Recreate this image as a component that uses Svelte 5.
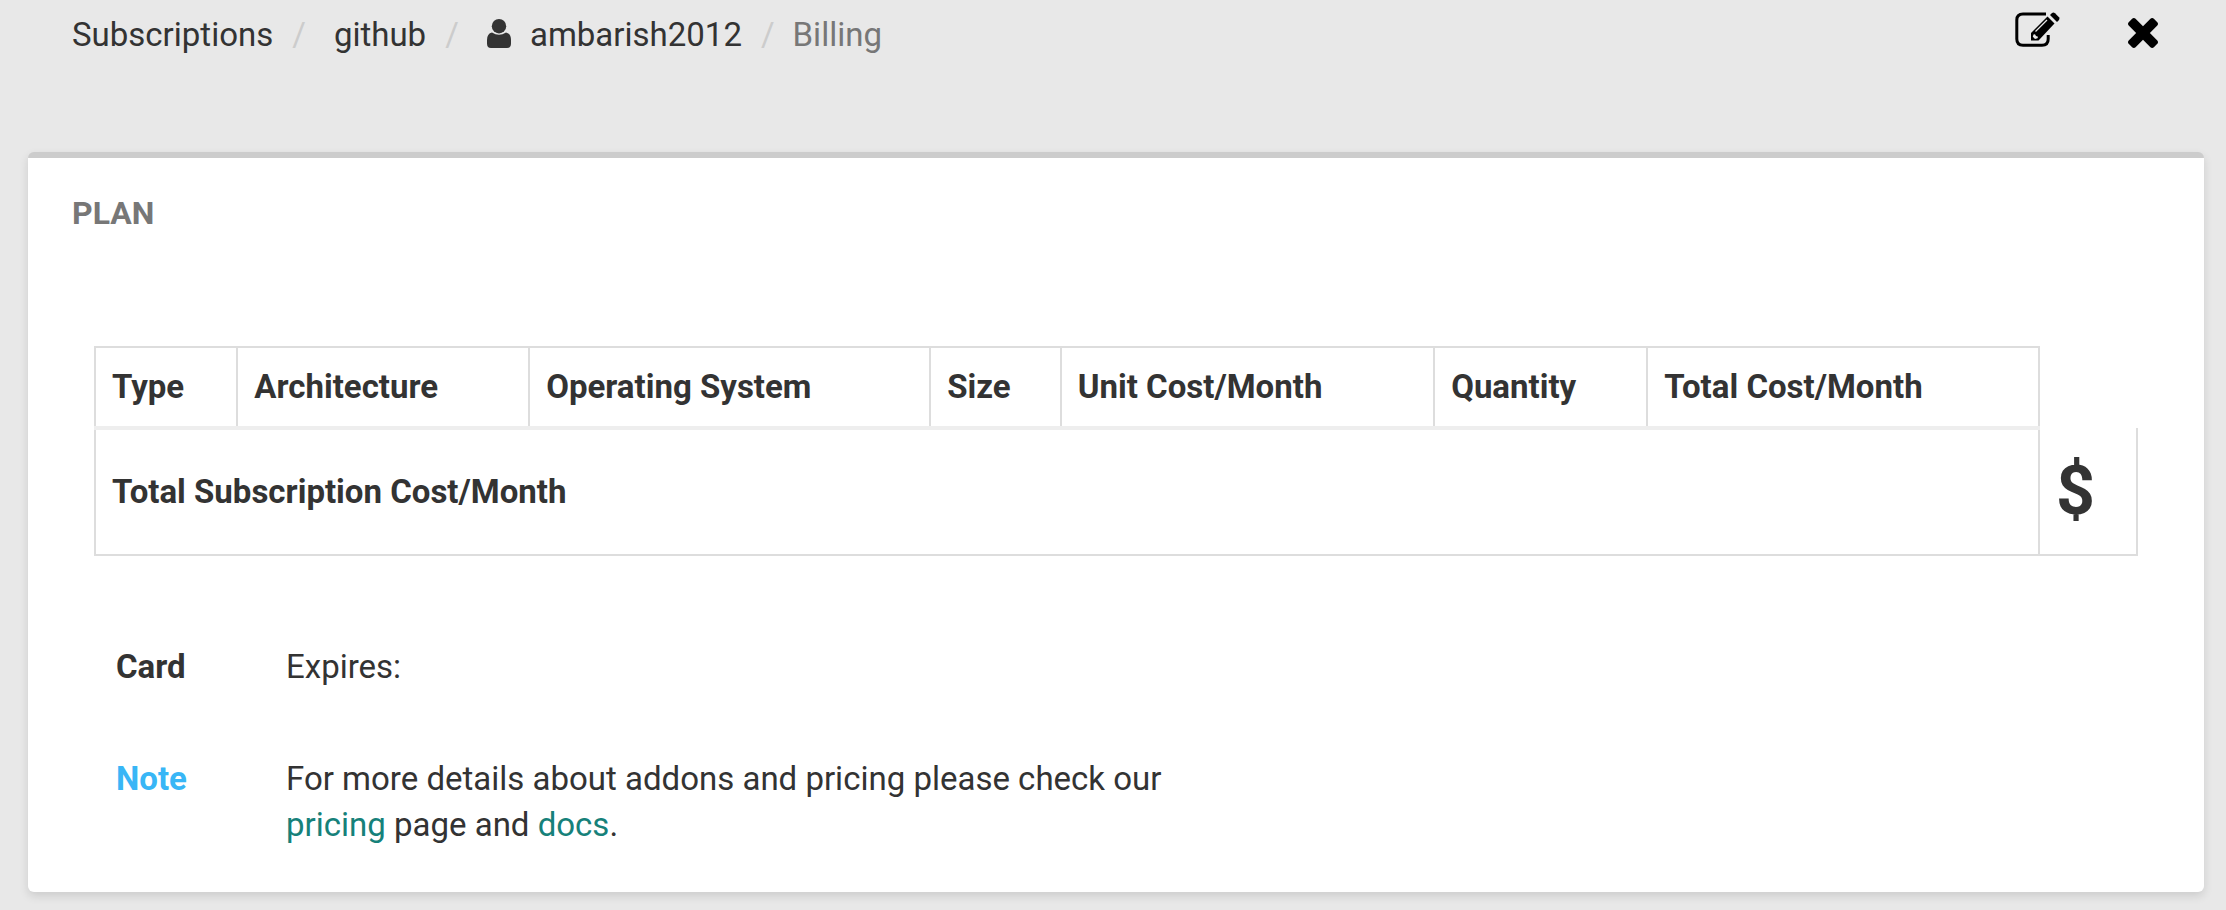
<script>
  const columns = [
    'Type',
    'Architecture',
    'Operating System',
    'Size',
    'Unit Cost/Month',
    'Quantity',
    'Total Cost/Month'
  ];
</script>

<header>
  <nav aria-label="Breadcrumb">
    <ol>
      <li><a href="#subscriptions">Subscriptions</a></li>
      <li><a href="#github">github</a></li>
      <li>
        <a class="user" href="#account">
          <svg viewBox="0 0 24 29" width="24" height="29" aria-hidden="true">
            <circle cx="12" cy="7.200" r="7.200" />
            <path d="M5 13.500Q8.500 15.800 12 15.800Q15.500 15.800 19 13.500Q24 14.500 24 21V24.500Q24 29 20 29H4Q0 29 0 24.500V21Q0 14.500 5 13.500Z" />
          </svg>
          ambarish2012
        </a>
      </li>
      <li class="current" aria-current="page">Billing</li>
    </ol>
  </nav>
  <div class="actions">
    <button type="button" aria-label="Edit">
      <svg viewBox="0 0 46 36" width="46" height="36" aria-hidden="true">
        <path d="M31 2H8Q1.800 2 1.800 8V27Q1.800 33.200 8 33.200H27Q33.200 33.200 33.200 27V23" fill="none" stroke="#000" stroke-width="3" />
        <path d="M16 28.500V21L32.500 4.500L39.500 11.500L23.500 28.500Z" />
        <path d="M35 3L37 1Q38.500 0 40 1.200L44 5.200Q45 6.500 44 8L42 10Z" />
        <path d="M20.500 19.500L32 8" fill="none" stroke="#e8e8e8" stroke-width="1.200" />
        <path d="M18.500 22.500L20 22.200L21 24L23 24.800L22.500 26.300L20 27L17.800 24.800Z" fill="#e8e8e8" />
      </svg>
    </button>
    <button type="button" aria-label="Close">
      <svg viewBox="302 366 1188 1188" width="30" height="30" aria-hidden="true">
        <path d="M1490 1322q0 40-28 68l-136 136q-28 28-68 28t-68-28l-294-294-294 294q-28 28-68 28t-68-28l-136-136q-28-28-28-68t28-68l294-294-294-294q-28-28-28-68t28-68l136-136q28-28 68-28t68 28l294 294 294-294q28-28 68-28t68 28l136 136q28 28 28 68t-28 68l-294 294 294 294q28 28 28 68z" />
      </svg>
    </button>
  </div>
</header>

<main>
  <h1>PLAN</h1>

  <table>
    <thead>
      <tr>
        {#each columns as column}
          <th scope="col">{column}</th>
        {/each}
      </tr>
    </thead>
    <tbody>
      <tr>
        <th scope="row" colspan={columns.length}>Total Subscription Cost/Month</th>
        <td class="total">$</td>
      </tr>
    </tbody>
  </table>

  <dl>
    <dt>Card</dt>
    <dd>Expires:</dd>
    <dt class="note">Note</dt>
    <dd>
      For more details about addons and pricing please check our
      <a href="#pricing">pricing</a> page and <a href="#docs">docs</a>.
    </dd>
  </dl>
</main>

<style>
  :global(body) {
    margin: 0;
    background: #e8e8e8;
    color: #333;
    font: 33px/46px Roboto, sans-serif;
  }

  header {
    display: flex;
    justify-content: space-between;
    padding: 12px 68px 0 72px;
  }

  ol {
    display: flex;
    margin: 0;
    padding: 0;
    list-style: none;
  }

  li + li::before {
    content: '/';
    padding: 0 28px 0 19px;
    color: #ccc;
  }

  li.current::before {
    padding-right: 18px;
  }

  a {
    color: #16817a;
    text-decoration: none;
  }

  nav a {
    color: #333;
  }

  .user svg {
    margin-right: 11px;
    vertical-align: -2px;
    fill: currentColor;
  }

  .current {
    color: #777;
  }

  .actions {
    display: flex;
    align-items: flex-start;
    gap: 67px;
  }

  button {
    display: flex;
    align-items: flex-end;
    height: 36px;
    padding: 0;
    border: 0;
    background: none;
    cursor: pointer;
  }

  main {
    margin: 94px 22px 18px 28px;
    padding: 32px 66px 44px;
    border-top: 6px solid #ccc;
    border-radius: 6px;
    background: #fff;
    box-shadow: 0 4px 10px rgba(0, 0, 0, 0.12);
  }

  h1 {
    margin: 0 0 110px -22px;
    color: #777;
    font-size: 32px;
    line-height: 46px;
    font-weight: 700;
  }

  table {
    width: 100%;
    border-collapse: collapse;
  }

  th,
  td {
    padding: 16px;
    border: 2px solid #ddd;
    text-align: left;
    font-weight: 700;
  }

  thead th {
    border-bottom: 4px solid #eee;
  }

  .total {
    border-top: 0;
    font-size: 68px;
    line-height: 94px;
  }

  dl {
    display: grid;
    grid-template-columns: 170px minmax(0, 900px);
    row-gap: 66px;
    margin: 88px 0 0 22px;
  }

  dt {
    font-weight: 700;
  }

  dd {
    margin: 0;
  }

  .note {
    color: #38b6f6;
  }
</style>
